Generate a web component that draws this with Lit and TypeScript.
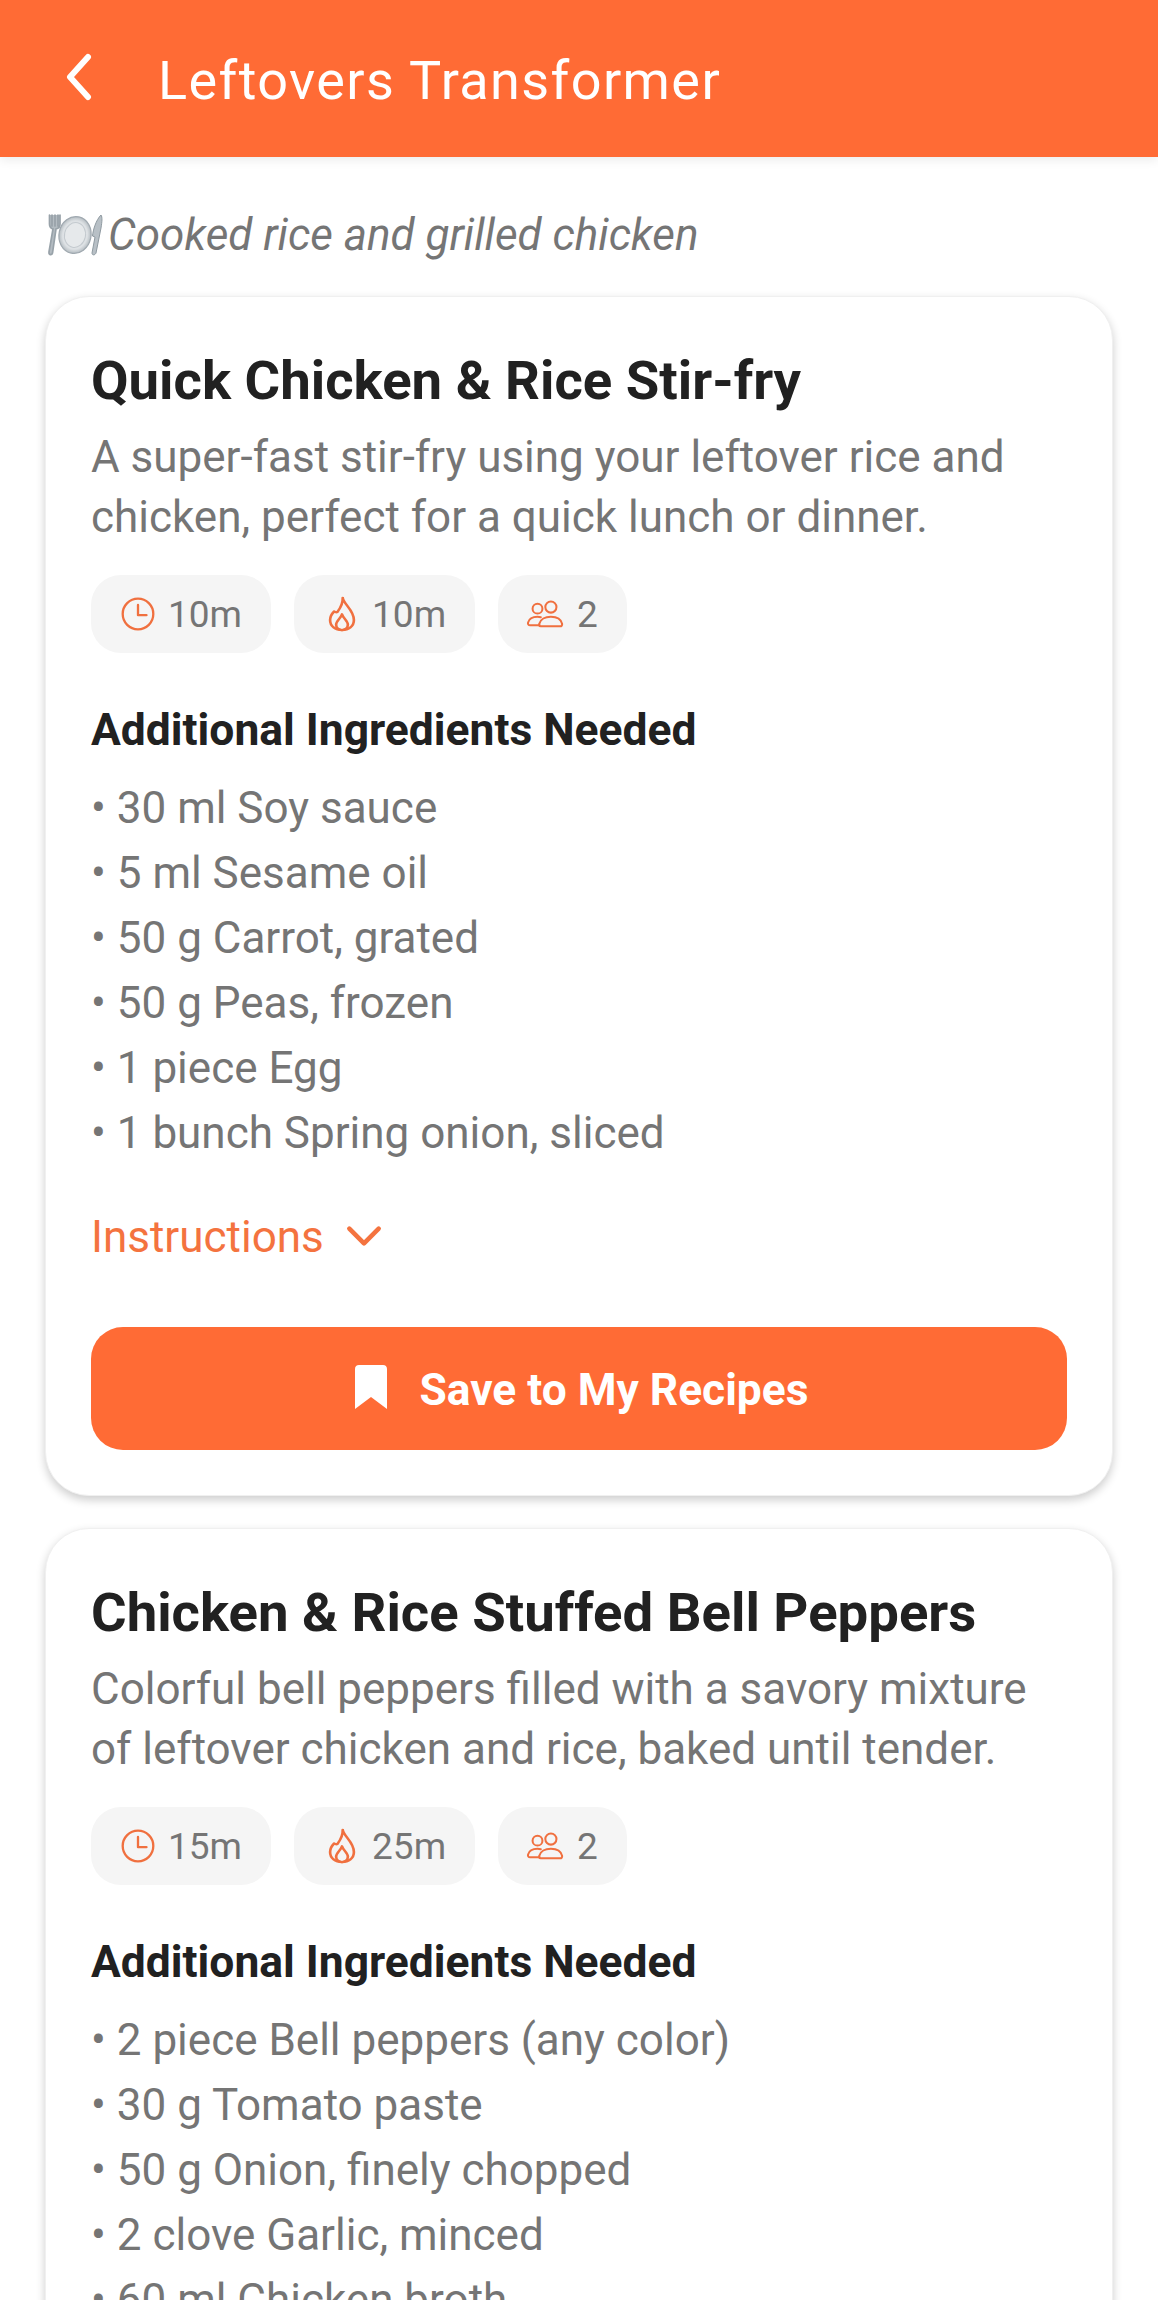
import { LitElement, html, css, svg } from "lit";
import { customElement } from "lit/decorators.js";

interface Recipe {
  title: string;
  desc: string[];
  prep: string;
  cook: string;
  serves: string;
  items: string[];
}

const RECIPES: Recipe[] = [
  {
    title: "Quick Chicken & Rice Stir-fry",
    desc: ["A super-fast stir-fry using your leftover rice and", "chicken, perfect for a quick lunch or dinner."],
    prep: "10m",
    cook: "10m",
    serves: "2",
    items: ["30 ml Soy sauce", "5 ml Sesame oil", "50 g Carrot, grated", "50 g Peas, frozen", "1 piece Egg", "1 bunch Spring onion, sliced"],
  },
  {
    title: "Chicken & Rice Stuffed Bell Peppers",
    desc: ["Colorful bell peppers filled with a savory mixture", "of leftover chicken and rice, baked until tender."],
    prep: "15m",
    cook: "25m",
    serves: "2",
    items: ["2 piece Bell peppers (any color)", "30 g Tomato paste", "50 g Onion, finely chopped", "2 clove Garlic, minced", "60 ml Chicken broth"],
  },
];

const clock = svg`<circle cx="14" cy="14" r="12.6"/><path d="M14 6.5V15H21"/>`;
const flame = svg`<path d="M14.5 1.5C15.5 7 22.5 11 22.5 19C22.5 24 18.8 27 14 27C9.2 27 5.5 24 5.5 19C5.5 15.8 7 13.8 8.4 12.2C9.2 12.8 10 13 10.8 12.6C12.8 9.5 14.8 6 14.5 1.5Z"/><path d="M14 14.5C15 17.8 18.2 19.8 18.2 22.8C18.2 25.3 16.2 27 14 27C11.8 27 9.8 25.3 9.8 22.8C9.8 19.8 13 17.8 14 14.5Z"/>`;
const people = svg`<circle cx="10.5" cy="9" r="4.6"/><circle cx="23" cy="7.5" r="5.2"/><path d="M12.5 24.5H3.6C2 24.5 1.3 23.4 1.7 22C2.6 18.6 6 16.6 10.5 16.6C11.6 16.6 12.6 16.7 13.6 17"/><path d="M13.5 25.5H31.5C33 25.5 33.8 24.4 33.4 23C32.5 19 28.4 16.5 23 16.5C17.6 16.5 13.2 19 12.2 23C11.8 24.4 12 25.5 13.5 25.5Z"/>`;

@customElement("app-root")
export class AppRoot extends LitElement {
  static styles = css`
    :host {
      display: block;
      height: 2300px;
      overflow: hidden;
      background: #ffffff;
      font-family: Roboto, "Liberation Sans", sans-serif;
      color: #757575;
    }
    .bar {
      height: 157px;
      background: #ff6b35;
      display: flex;
      align-items: center;
      box-shadow: 0 3px 10px rgba(0, 0, 0, 0.08);
      position: relative;
      box-sizing: border-box;
      padding-left: 64px;
    }
    .back {
      width: 32px;
      height: 48px;
      fill: none;
      stroke: #fff;
      stroke-width: 6;
      stroke-linecap: round;
      stroke-linejoin: round;
      margin-top: -3px;
    }
    .bar-title {
      margin-left: 62px;
      color: #fff;
      font-size: 54px;
      letter-spacing: 1.4px;
      line-height: 60px;
      margin-top: 4px;
    }
    .main {
      padding: 0 45px;
      display: flex;
      flex-direction: column;
      gap: 32px;
    }
    .source {
      display: flex;
      align-items: center;
      height: 139px;
      margin-bottom: -32px;
      font-size: 44px;
      font-style: italic;
      color: #757575;
      padding-top: 17px;
      box-sizing: border-box;
      margin-left: 1px;
    }
    .plate {
      width: 58px;
      height: 42px;
      flex: none;
      margin-right: 4px;
    }
    .card {
      background: #fff;
      border: 1px solid #f0f0f0;
      border-radius: 44px;
      box-shadow: 0 4px 10px rgba(0, 0, 0, 0.2);
      padding: 45px 45px 45px;
      box-sizing: border-box;
      display: flex;
      flex-direction: column;
    }
    .title {
      font-size: 54.5px;
      font-weight: 700;
      color: #212121;
      line-height: 66px;
      margin: 5px 0 0;
      white-space: nowrap;
    }
    .desc {
      font-size: 44px;
      line-height: 60px;
      margin-top: 14px;
      white-space: nowrap;
    }
    .chips {
      display: flex;
      gap: 23px;
      margin-top: 28px;
    }
    .chip {
      height: 78px;
      border-radius: 30px;
      background: #f5f5f5;
      display: flex;
      align-items: center;
      padding: 0 29px 0 30px;
      font-size: 37px;
      color: #757575;
    }
    .chip svg {
      width: 34px;
      height: 34px;
      fill: none;
      stroke: #f0703f;
      stroke-width: 1.9;
      stroke-linejoin: round;
      stroke-linecap: round;
      margin-right: 13px;
      flex: none;
    }
    .chip svg.tall {
      width: 28px;
      height: 36px;
      margin-left: 4px;
      margin-right: 16px;
    }
    .chip svg.wide {
      width: 38px;
      height: 30px;
      margin-left: -2px;
      margin-right: 13px;
    }
    h3 {
      margin: 50px 0 0;
      font-size: 44.4px;
      line-height: 54px;
      font-weight: 700;
      color: #212121;
      white-space: nowrap;
    }
    ul {
      list-style: none;
      margin: 19px 0 0;
      padding: 0;
    }
    li {
      font-size: 44px;
      line-height: 65px;
      white-space: nowrap;
    }
    .toggle {
      display: flex;
      align-items: center;
      color: #f4733f;
      font-size: 44px;
      line-height: 60px;
      margin-top: 41px;
    }
    .toggle svg {
      width: 36px;
      height: 22px;
      margin-left: 22px;
      margin-top: -3px;
      fill: none;
      stroke: #f4733f;
      stroke-width: 5;
      stroke-linecap: round;
      stroke-linejoin: round;
    }
    .save {
      height: 123px;
      margin-top: 60px;
      padding: 2px 0 0 4px;
      box-sizing: border-box;
      background: #ff6b35;
      border-radius: 32px;
      display: flex;
      align-items: center;
      justify-content: center;
      color: #fff;
      font-size: 44.3px;
      font-weight: 700;
    }
    .save svg {
      width: 34px;
      height: 44px;
      margin-right: 32px;
      fill: #fff;
      margin-top: -5px;
    }
  `;

  private recipe(r: Recipe) {
    return html`<section class="card">
      <div class="title">${r.title}</div>
      <div class="desc">${r.desc.map((l) => html`<div>${l}</div>`)}</div>
      <div class="chips">
        <div class="chip"><svg viewBox="0 0 28 28">${clock}</svg>${r.prep}</div>
        <div class="chip"><svg class="tall" viewBox="4 0 20 28.5" preserveAspectRatio="none">${flame}</svg>${r.cook}</div>
        <div class="chip"><svg class="wide" viewBox="0 0 35 28">${people}</svg>${r.serves}</div>
      </div>
      <h3>Additional Ingredients Needed</h3>
      <ul>${r.items.map((i) => html`<li>• ${i}</li>`)}</ul>
      <div class="toggle">Instructions
        <svg viewBox="0 0 38 24"><path d="M3 4L19 20L35 4"/></svg>
      </div>
      <div class="save">
        <svg viewBox="0 0 34 44"><path d="M5 0H29C31.5 0 33 1.5 33 4V44L17 32L1 44V4C1 1.5 2.5 0 5 0Z"/></svg>
        Save to My Recipes
      </div>
    </section>`;
  }

  render() {
    return html`
      <header class="bar">
        <svg class="back" viewBox="0 0 32 48"><path d="M24 4L6 24L24 44"/></svg>
        <div class="bar-title">Leftovers Transformer</div>
      </header>
      <main class="main">
        <div class="source">
          <svg class="plate" viewBox="0 0 58 42">
            <defs>
              <radialGradient id="pl" cx="50%" cy="50%" r="55%">
                <stop offset="0%" stop-color="#f4f6f7" />
                <stop offset="70%" stop-color="#dde1e4" />
                <stop offset="100%" stop-color="#a4adb3" />
              </radialGradient>
            </defs>
            <path d="M6 1V12M9 1V12M12 1V12M3.5 1V10C3.5 13 5 14.5 7 15L3 38C2.6 41 5.8 41.5 6.5 39L10 15C12.5 14.5 14 13 14 10V1" fill="#b4bcc2" stroke="#98a2a9" stroke-width="1.7" stroke-linecap="round" />
            <ellipse cx="29" cy="21" rx="16" ry="18.5" fill="url(#pl)" stroke="#a0a9b0" stroke-width="1.2" transform="rotate(12 29 21)" />
            <ellipse cx="29" cy="21" rx="10.5" ry="12.5" fill="#e6e9eb" stroke="#c4cacf" stroke-width="1" transform="rotate(12 29 21)" />
            <path d="M55 1C50 6 47 16 46.5 22L49 23L46 39C46 41.5 49 41.5 50 39L55 14C56 8 56.5 3 55 1Z" fill="#b8c0c6" stroke="#8f9aa1" stroke-width="1" />
          </svg>
          <span>Cooked rice and grilled chicken</span>
        </div>
        ${RECIPES.map((r) => this.recipe(r))}
      </main>
    `;
  }
}
